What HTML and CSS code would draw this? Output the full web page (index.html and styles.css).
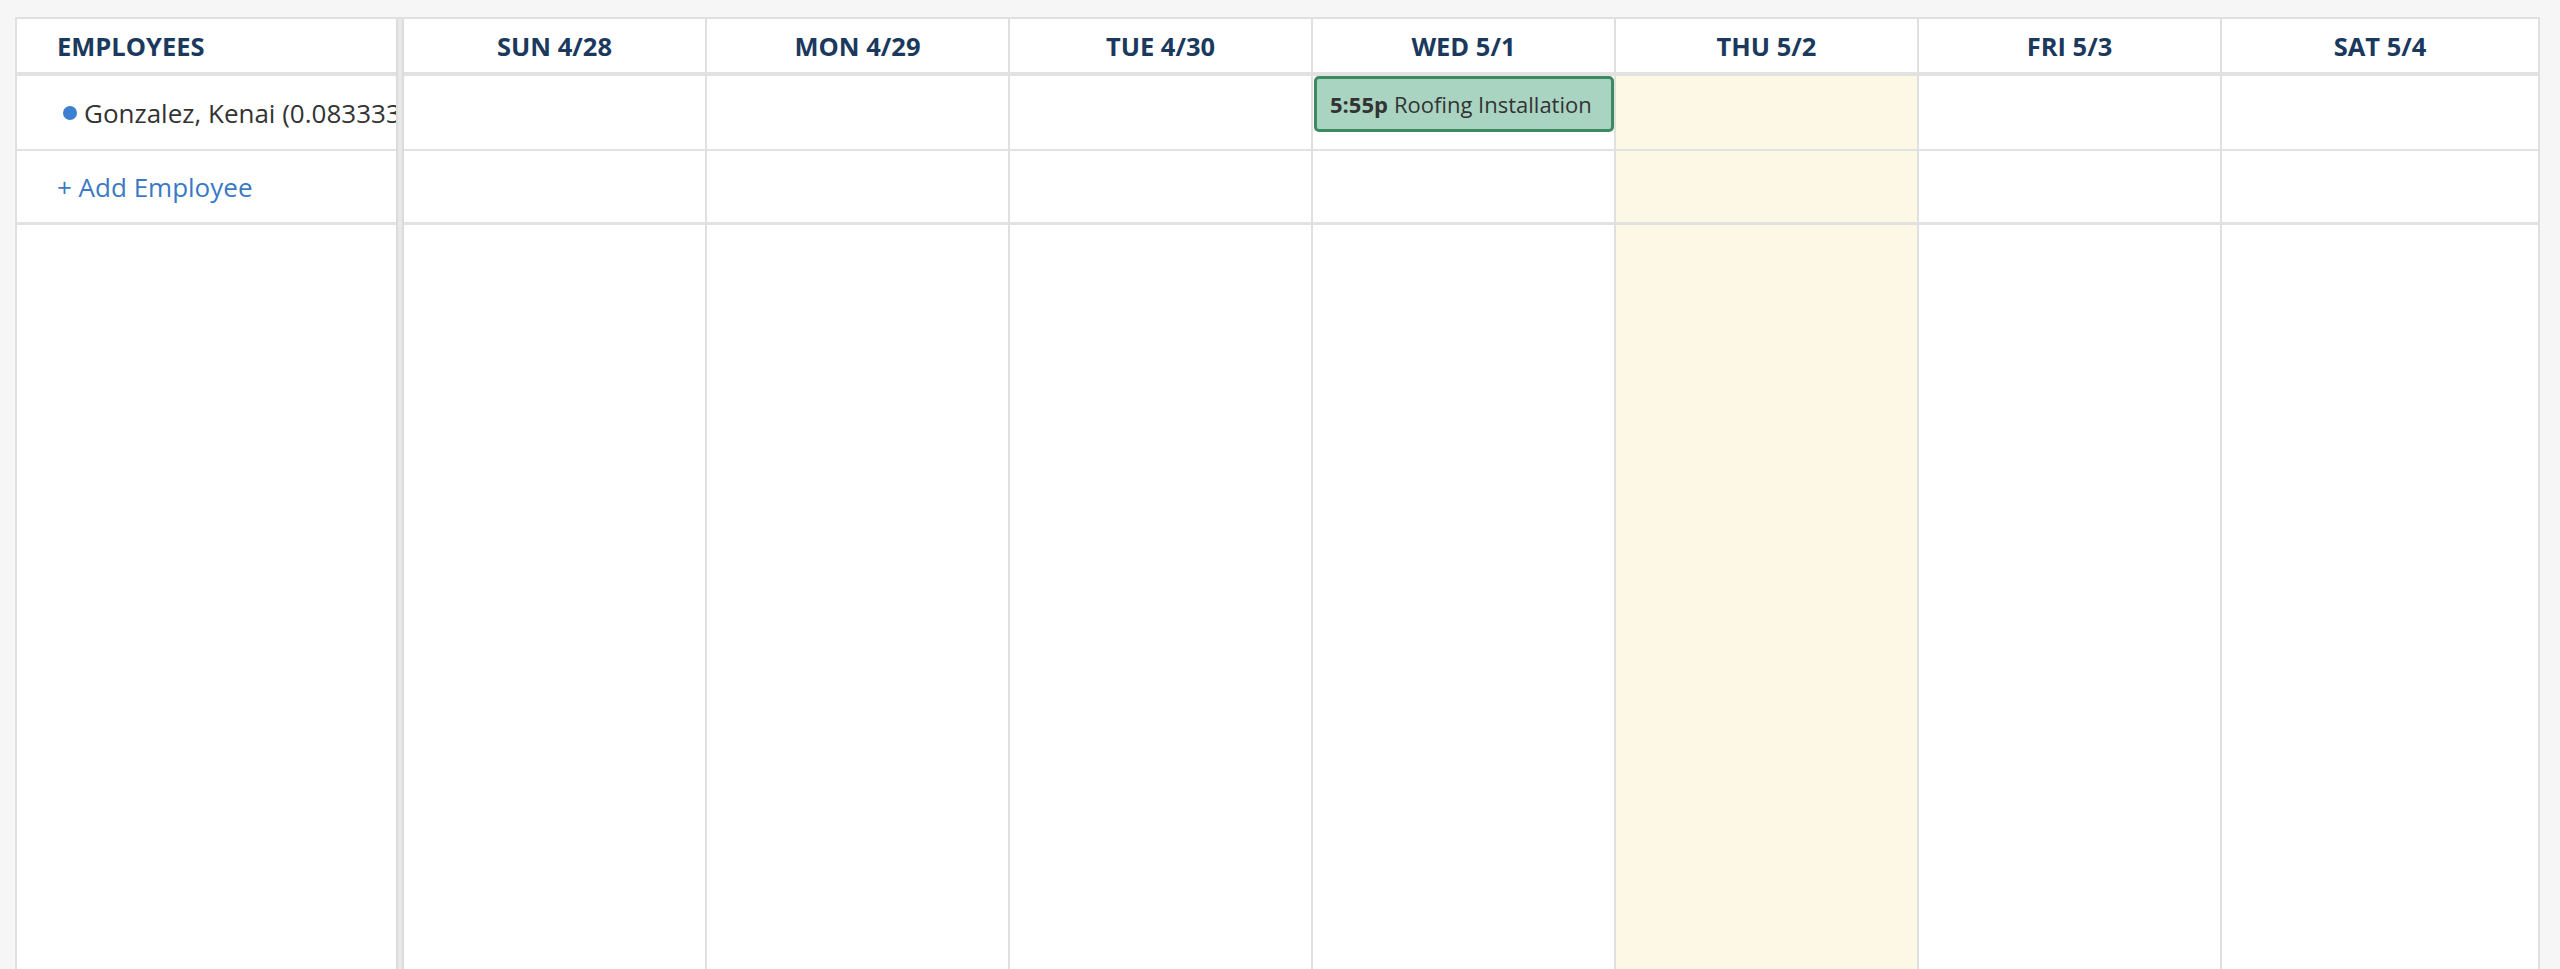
FILE: index.html
```html
<!DOCTYPE html>
<html lang="en">
<head>
    <meta charset="UTF-8">
    <meta name="viewport" content="width=device-width, initial-scale=1.0">
    <title>Schedule - Week of 4/28</title>
    <link rel="stylesheet" href="styles.css">
</head>
<body>
    <div class="scheduler">
        <div class="employee-panel">
            <div class="panel-header">Employees</div>
            <div class="row employee-row">
                <span class="status-dot"></span>
                <span class="employee-name">Gonzalez, Kenai (0.0833333333 hrs)</span>
            </div>
            <div class="row add-row">
                <a href="#" class="add-link">+ Add Employee</a>
            </div>
        </div>

        <div class="resizer"></div>

        <div class="week">
            <div class="day">
                <div class="day-header">Sun 4/28</div>
                <div class="row employee-row"></div>
                <div class="row add-row"></div>
            </div>
            <div class="day">
                <div class="day-header">Mon 4/29</div>
                <div class="row employee-row"></div>
                <div class="row add-row"></div>
            </div>
            <div class="day">
                <div class="day-header">Tue 4/30</div>
                <div class="row employee-row"></div>
                <div class="row add-row"></div>
            </div>
            <div class="day">
                <div class="day-header">Wed 5/1</div>
                <div class="row employee-row">
                    <div class="shift"><strong>5:55p</strong> Roofing Installation</div>
                </div>
                <div class="row add-row"></div>
            </div>
            <div class="day today">
                <div class="day-header">Thu 5/2</div>
                <div class="row employee-row"></div>
                <div class="row add-row"></div>
            </div>
            <div class="day">
                <div class="day-header">Fri 5/3</div>
                <div class="row employee-row"></div>
                <div class="row add-row"></div>
            </div>
            <div class="day">
                <div class="day-header">Sat 5/4</div>
                <div class="row employee-row"></div>
                <div class="row add-row"></div>
            </div>
        </div>
    </div>
</body>
</html>
```

FILE: styles.css
```css
* {
    margin: 0;
    padding: 0;
    box-sizing: border-box;
}

body {
    font-family: 'Open Sans', 'Liberation Sans', sans-serif;
    background: #f6f6f6;
    padding: 17px 20px 0 15px;
    overflow: hidden;
}

.scheduler {
    display: flex;
    height: 1100px;
    background: white;
    border: 2px solid #e0e0e0;
    border-bottom: none;
}

/* left column with the employee list */
.employee-panel {
    width: 379px;
    flex-shrink: 0;
}

.panel-header,
.day-header {
    height: 57px;
    border-bottom: 4px solid #e2e2e2;
    display: flex;
    align-items: center;
    color: #1b395d;
    font-size: 25.5px;
    font-weight: 700;
    text-transform: uppercase;
}

.panel-header {
    padding-left: 40px;
}

.day-header {
    justify-content: center;
}

.row {
    display: flex;
    align-items: center;
}

.employee-row {
    height: 75px;
    border-bottom: 2px solid #e2e2e2;
}

.add-row {
    height: 74px;
    border-bottom: 3px solid #e2e2e2;
}

.employee-panel .employee-row {
    padding-left: 46px;
    gap: 7px;
    overflow: hidden;
}

.status-dot {
    width: 14px;
    height: 14px;
    flex-shrink: 0;
    border-radius: 50%;
    background: #3d7fd0;
}

.employee-name {
    color: #333;
    font-size: 26px;
    white-space: nowrap;
}

.employee-panel .add-row {
    padding-left: 40px;
}

.add-link {
    color: #3a79c4;
    font-size: 26px;
    text-decoration: none;
}

.add-link:hover {
    text-decoration: underline;
}

/* drag handle between the list and the week */
.resizer {
    width: 8px;
    flex-shrink: 0;
    background: #e8e8e8;
    border-left: 2px solid #dcdcdc;
    border-right: 2px solid #dcdcdc;
    cursor: col-resize;
}

.week {
    flex: 1;
    display: grid;
    grid-template-columns: repeat(6, 303px) 1fr;
}

.day {
    border-right: 2px solid #e0e0e0;
}

.day:last-child {
    border-right: none;
}

.day.today {
    background: #fdf8e5;
}

.day.today .day-header {
    background: white;
}

.day .employee-row {
    align-items: flex-start;
}

.shift {
    width: 100%;
    height: 56px;
    margin-left: 1px;
    padding-left: 13px;
    display: flex;
    align-items: center;
    gap: 6px;
    background: #a9d4c2;
    border: 3px solid #3e8a5f;
    border-radius: 5px;
    color: #333;
    font-size: 22px;
    white-space: nowrap;
    overflow: hidden;
    cursor: pointer;
}

.shift strong {
    font-weight: 700;
}
```
